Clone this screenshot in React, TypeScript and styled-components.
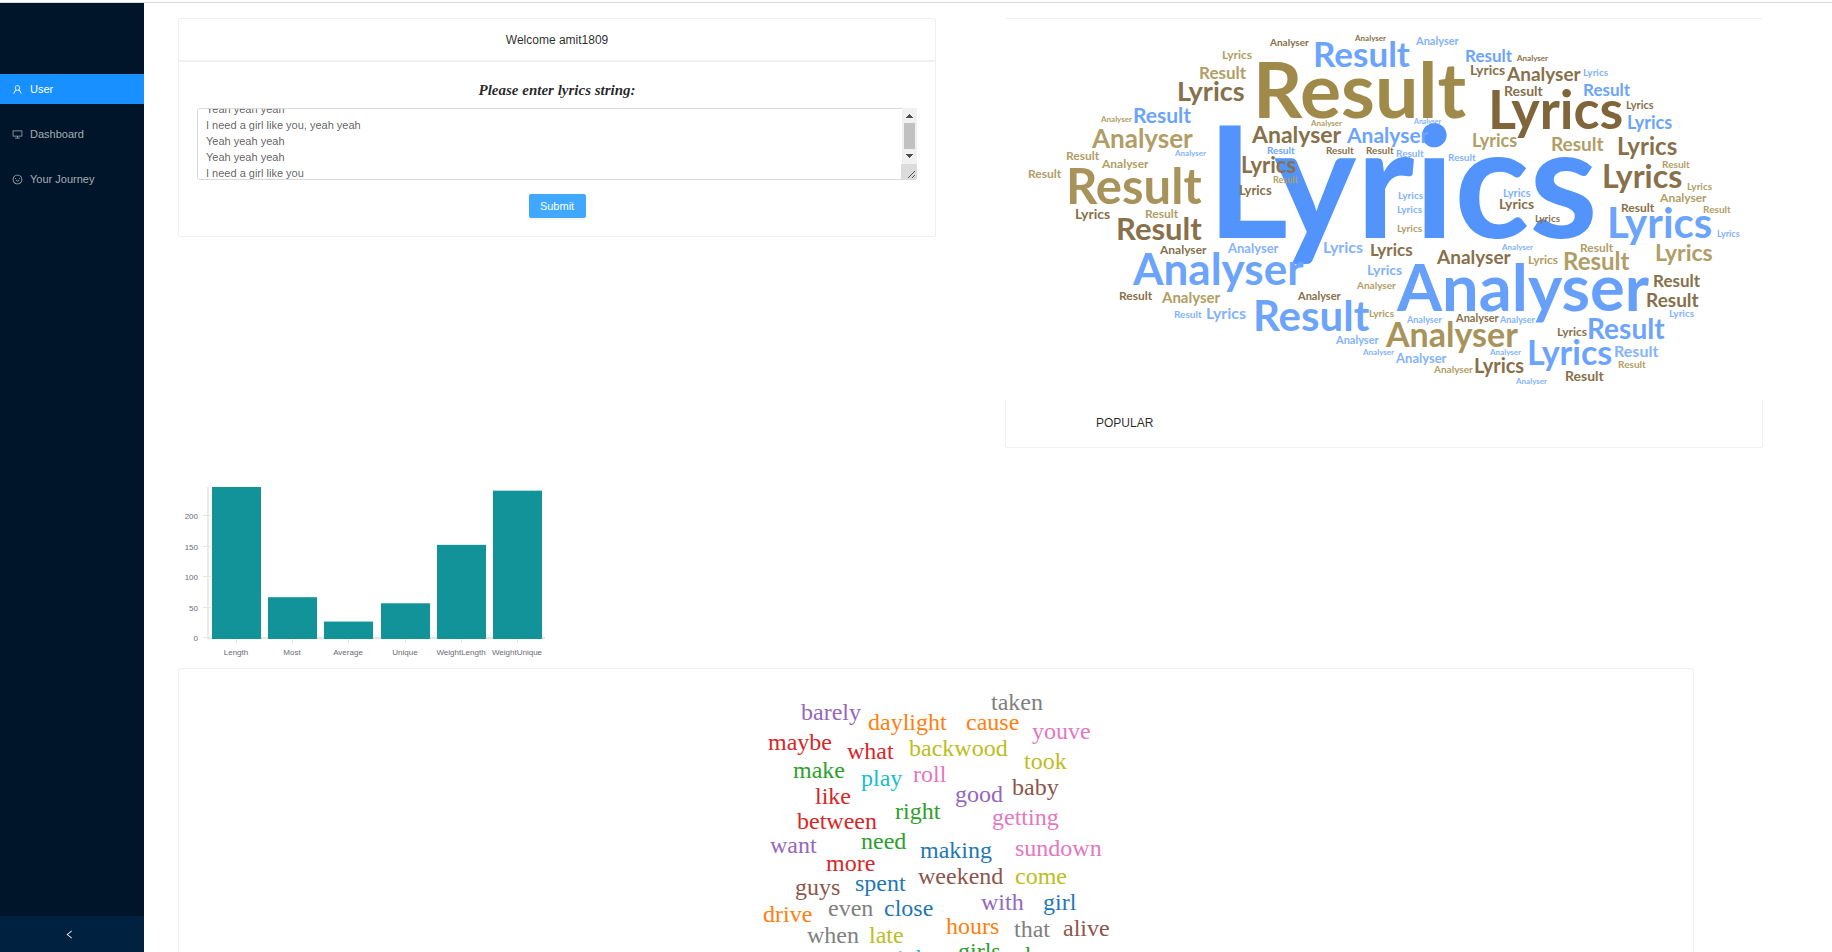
import React, { useEffect, useRef } from "react";
import styled, { createGlobalStyle } from "styled-components";
import { AiOutlineDesktop, AiOutlineLeft, AiOutlineSmile, AiOutlineUser } from "react-icons/ai";

const GlobalStyle = createGlobalStyle`
  *, *::before, *::after { box-sizing: border-box; }
  body {
    margin: 0;
    background: #fff;
    color: rgba(0, 0, 0, 0.85);
    font-family: "Liberation Sans", Arial, sans-serif;
    font-size: 12px;
    line-height: 18px;
  }
`;

const Page = styled.div`
  display: flex;
  flex-direction: column;
  height: 100vh;
  overflow: hidden;
`;

const TopRule = styled.div`
  flex: none;
  height: 3px;
  border-bottom: 1px solid #d9d9d9;
`;

const Layout = styled.div`
  display: flex;
  flex: 1;
  min-height: 0;
`;

const Sider = styled.aside`
  display: flex;
  flex: none;
  flex-direction: column;
  justify-content: space-between;
  width: 144px;
  background: #001529;
`;

const Menu = styled.nav`
  display: flex;
  flex-direction: column;
  gap: 15px;
  padding-top: 71px;
`;

const MenuItem = styled.a<{ $active?: boolean }>`
  display: flex;
  align-items: center;
  gap: 7px;
  height: 30px;
  padding-left: 12px;
  background: ${(p) => (p.$active ? "#1890ff" : "transparent")};
  color: ${(p) => (p.$active ? "#fff" : "rgba(255, 255, 255, 0.65)")};
  font-size: 11px;
  text-decoration: none;

  svg { width: 11px; height: 11px; }
`;

const Collapse = styled.button`
  display: flex;
  align-items: center;
  justify-content: center;
  height: 36px;
  border: 0;
  padding: 0 6px 0 0;
  background: #002140;
  color: #fff;

  svg { width: 11px; height: 11px; }
`;

const Content = styled.main`
  flex: 1;
  min-width: 0;
  overflow: hidden;
  padding: 15px 0 0 34px;
`;

const Row = styled.div`
  display: grid;
  grid-template-columns: 1fr 1fr;
  align-items: start;
`;

const Card = styled.section`
  width: 91.667%;
  border: 1px solid #f0f0f0;
  border-radius: 2px;
  background: #fff;
`;

const CardHead = styled.header`
  padding: 12px 18px 11px;
  border-bottom: 2px solid #f0f0f0;
  text-align: center;
`;

const LyricsForm = styled.form`
  display: flex;
  flex-direction: column;
  align-items: center;
  padding: 18px;
`;

const LyricsLabel = styled.label`
  margin-bottom: 8px;
  font-family: "Liberation Serif", "Times New Roman", serif;
  font-size: 15px;
  font-style: italic;
  font-weight: 700;
  line-height: 20px;
`;

const LyricsField = styled.div`
  position: relative;
  width: 100%;
  height: 72px;
  margin-bottom: 14px;
`;

const LyricsInput = styled.textarea`
  display: block;
  width: 100%;
  height: 100%;
  padding: 4px 24px 4px 8px;
  border: 1px solid #d9d9d9;
  border-radius: 3px;
  outline: 0;
  color: rgba(0, 0, 0, 0.65);
  font-family: inherit;
  font-size: 11px;
  line-height: 16px;
  resize: none;
  scrollbar-width: none;
`;

const ScrollTrack = styled.svg`
  position: absolute;
  top: 0;
  right: 0;
  pointer-events: none;
`;

const Submit = styled.button`
  width: 57px;
  height: 24px;
  border: 0;
  border-radius: 2px;
  background: #40a9ff;
  box-shadow: 0 2px 0 rgba(0, 0, 0, 0.04);
  color: #fff;
  font-family: inherit;
  font-size: 11px;
`;

const Cover = styled.div`
  margin: 0 -1px;
  background: #fff;

  svg { display: block; width: 100%; height: auto; }
`;

const CardCaption = styled.div`
  padding: 14px 90px 15px;
`;

const ChartBox = styled.figure`
  margin: 24px 0 0;

  svg { display: block; }
`;

const WordCard = styled(Card)`
  display: flex;
  justify-content: center;
  padding: 18px;

  svg { flex: none; overflow: visible; }
`;

const lyrics = [
  "I need a girl like you, yeah yeah",
  "Yeah yeah yeah",
  "Yeah yeah yeah",
  "I need a girl like you, yeah yeah",
  "Yeah yeah yeah",
  "Yeah yeah yeah",
  "I need a girl like you",
  "Maybe it's 6:45",
].join("\n");

const blue = "#6ca4fb";
const sky = "#84b3fc";
const brown = "#87704a";
const tan = "#b09e66";

type Placed = [word: string, x: number, y: number, width: number, color: string];

const coverWords: Placed[] = [
  ["Lyrics", 202, 219, 391, "#5294fb"],
  ["Analyser", 392, 292, 252, "#66a0fb"],
  ["Result", 248, 99, 213, "#a08a4a"],
  ["Analyser", 128, 266, 169, blue],
  ["Lyrics", 483, 110, 135, "#80643a"],
  ["Result", 61, 185, 135, "#a8935a"],
  ["Analyser", 381, 328, 131, "#a8935a"],
  ["Result", 248, 312, 115, blue],
  ["Lyrics", 602, 219, 106, blue],
  ["Analyser", 87, 129, 100, tan],
  ["Result", 308, 48, 97, blue],
  ["Analyser", 265, 27, 37, brown],
  ["Analyser", 350, 22, 31, brown],
  ["Lyrics", 217, 40, 29, tan],
  ["Result", 194, 60, 48, tan],
  ["Lyrics", 172, 82, 67, brown],
  ["Analyser", 96, 103, 31, tan],
  ["Result", 128, 104, 58, blue],
  ["Analyser", 306, 107, 32, tan],
  ["Analyser", 247, 124, 89, brown],
  ["Analyser", 342, 124, 80, blue],
  ["Result", 262, 135, 29, blue],
  ["Result", 321, 135, 28, brown],
  ["Result", 361, 135, 29, brown],
  ["Result", 61, 141, 34, tan],
  ["Analyser", 170, 137, 31, sky],
  ["Analyser", 97, 149, 48, tan],
  ["Result", 23, 159, 34, tan],
  ["Lyrics", 236, 154, 56, brown],
  ["Result", 268, 164, 24, tan],
  ["Lyrics", 234, 176, 32, brown],
  ["Analyser", 411, 26, 41, sky],
  ["Result", 460, 43, 48, blue],
  ["Analyser", 512, 42, 32, brown],
  ["Lyrics", 465, 56, 34, brown],
  ["Analyser", 502, 62, 74, brown],
  ["Lyrics", 578, 57, 25, sky],
  ["Result", 499, 77, 39, brown],
  ["Result", 578, 77, 48, blue],
  ["Lyrics", 621, 90, 28, brown],
  ["Lyrics", 622, 110, 44, blue],
  ["Analyser", 409, 105, 26, sky],
  ["Lyrics", 467, 128, 46, tan],
  ["Result", 546, 132, 53, tan],
  ["Lyrics", 612, 136, 60, brown],
  ["Result", 391, 138, 28, sky],
  ["Result", 443, 142, 29, sky],
  ["Result", 657, 149, 29, tan],
  ["Lyrics", 597, 169, 81, brown],
  ["Lyrics", 682, 171, 26, tan],
  ["Lyrics", 498, 178, 28, sky],
  ["Lyrics", 393, 180, 24, sky],
  ["Lyrics", 494, 190, 36, brown],
  ["Lyrics", 392, 194, 26, sky],
  ["Lyrics", 392, 213, 26, tan],
  ["Lyrics", 530, 203, 25, brown],
  ["Analyser", 655, 183, 48, tan],
  ["Result", 616, 193, 34, brown],
  ["Result", 698, 194, 29, tan],
  ["Lyrics", 712, 218, 23, sky],
  ["Analyser", 497, 231, 32, sky],
  ["Result", 575, 233, 34, tan],
  ["Lyrics", 523, 245, 31, tan],
  ["Result", 558, 251, 67, tan],
  ["Lyrics", 650, 242, 57, tan],
  ["Analyser", 432, 245, 74, brown],
  ["Lyrics", 365, 237, 43, brown],
  ["Lyrics", 362, 256, 35, sky],
  ["Analyser", 352, 270, 37, tan],
  ["Result", 648, 268, 48, brown],
  ["Result", 641, 288, 52, brown],
  ["Lyrics", 664, 298, 25, sky],
  ["Lyrics", 364, 298, 25, tan],
  ["Analyser", 402, 304, 36, sky],
  ["Analyser", 451, 303, 42, brown],
  ["Analyser", 495, 304, 36, sky],
  ["Result", 582, 320, 77, blue],
  ["Lyrics", 552, 317, 29, brown],
  ["Lyrics", 522, 346, 85, blue],
  ["Result", 609, 338, 43, sky],
  ["Result", 613, 349, 29, tan],
  ["Analyser", 485, 336, 31, sky],
  ["Analyser", 358, 336, 32, sky],
  ["Analyser", 391, 344, 52, sky],
  ["Analyser", 429, 354, 37, tan],
  ["Lyrics", 469, 354, 50, brown],
  ["Analyser", 511, 365, 31, sky],
  ["Result", 560, 362, 39, brown],
  ["Lyrics", 70, 200, 36, brown],
  ["Result", 140, 199, 34, tan],
  ["Result", 111, 221, 86, brown],
  ["Analyser", 155, 235, 47, brown],
  ["Analyser", 223, 234, 52, sky],
  ["Lyrics", 318, 234, 41, sky],
  ["Result", 114, 281, 34, brown],
  ["Analyser", 157, 284, 57, tan],
  ["Result", 169, 299, 29, sky],
  ["Lyrics", 201, 300, 39, sky],
  ["Analyser", 293, 281, 42, brown],
  ["Analyser", 331, 325, 42, sky],
];

const COVER_FONT = 'Lato, "Open Sans", sans-serif';
const ruler = document.createElement("canvas").getContext("2d")!;

function fontSizeFor(word: string, width: number) {
  ruler.font = `700 100px ${COVER_FONT}`;
  return Math.round((width * 100) / ruler.measureText(word).width);
}

function CoverCloud() {
  return (
    <svg viewBox="0 0 758 381" role="img" aria-label="Lyrics Analyser Result" fontFamily={COVER_FONT} fontWeight={700}>
      {coverWords.map(([word, x, y, width, color], i) => (
        <text key={i} x={x} y={y} fill={color} fontSize={fontSizeFor(word, width)}>
          {word}
        </text>
      ))}
    </svg>
  );
}

function LyricsScrollbar() {
  return (
    <ScrollTrack width="16" height="72" aria-hidden="true" shapeRendering="crispEdges">
      <rect x="1" width="15" height="56" fill="#f1f1f1" />
      <path d="M5 10h7l-3.5-4z" fill="#505050" />
      <rect x="3" y="15" width="11" height="26" fill="#c1c1c1" />
      <path d="M5 46h7l-3.5 4z" fill="#505050" />
      <path d="M0 56h16v14l-2 2H0z" fill="#dcdcdc" />
      <path d="M7 70l7-7M11 70l3-3" stroke="#555" fill="none" shapeRendering="auto" />
    </ScrollTrack>
  );
}

const bars = [
  { label: "Length", value: 248 },
  { label: "Most", value: 67 },
  { label: "Average", value: 27 },
  { label: "Unique", value: 57 },
  { label: "WeightLength", value: 153 },
  { label: "WeightUnique", value: 242 },
];
const ticks = [0, 50, 100, 150, 200];
const BASE = 166;
const yOf = (value: number) => BASE - (value * 151) / 248;

function BarChart() {
  return (
    <svg width="375" height="196" fontSize="8" fill="#6b6b76">
      <rect x="29" y="15" width="2" height="152" fill="#ebebed" />
      <rect x="29" y="165" width="338" height="2" fill="#e6e6e9" />
      {ticks.map((tick) => (
        <g key={tick}>
          <rect x="25" y={Math.round(yOf(tick)) - 1} width="8" height="1" fill="#e6e6e9" />
          <text x="20" y={Math.round(yOf(tick)) + 3} textAnchor="end">{tick}</text>
        </g>
      ))}
      {bars.map(({ label, value }, i) => {
        const x = 34 + Math.round(i * 56.2);
        return (
          <g key={label}>
            <rect x={x + 24} y={BASE} width="1" height="5" fill="#e6e6e9" />
            <rect x={x} y={yOf(value)} width="49" height={BASE + 1 - yOf(value)} fill="#12939a" />
            <text x={x + 24} y={BASE + 17} textAnchor="middle">{label}</text>
          </g>
        );
      })}
    </svg>
  );
}

const C = {
  blue: "#1f77b4",
  orange: "#ff7f0e",
  green: "#2ca02c",
  red: "#d62728",
  purple: "#9467bd",
  brown: "#8c564b",
  pink: "#e377c2",
  gray: "#7f7f7f",
  olive: "#bcbd22",
  cyan: "#17becf",
};

const lyricWords: [word: string, x: number, y: number, color: string][] = [
  ["barely", 65, 33, C.purple],
  ["taken", 255, 23, C.gray],
  ["daylight", 132, 43, C.orange],
  ["cause", 230, 43, C.orange],
  ["youve", 296, 52, C.pink],
  ["maybe", 32, 63, C.red],
  ["what", 111, 72, C.red],
  ["backwood", 173, 69, C.olive],
  ["took", 288, 82, C.olive],
  ["make", 57, 91, C.green],
  ["play", 125, 99, C.cyan],
  ["roll", 177, 95, C.pink],
  ["like", 79, 117, C.red],
  ["good", 219, 115, C.purple],
  ["baby", 276, 108, C.brown],
  ["right", 159, 132, C.green],
  ["between", 61, 142, C.red],
  ["getting", 256, 138, C.pink],
  ["want", 34, 166, C.purple],
  ["need", 125, 162, C.green],
  ["making", 184, 171, C.blue],
  ["sundown", 279, 169, C.pink],
  ["more", 90, 184, C.red],
  ["guys", 59, 208, C.brown],
  ["spent", 119, 204, C.blue],
  ["weekend", 182, 197, C.brown],
  ["come", 279, 197, C.olive],
  ["drive", 27, 235, C.orange],
  ["even", 92, 229, C.gray],
  ["close", 148, 229, C.blue],
  ["with", 245, 223, C.purple],
  ["girl", 307, 223, C.blue],
  ["when", 71, 256, C.gray],
  ["late", 133, 256, C.olive],
  ["hours", 210, 247, C.orange],
  ["that", 278, 250, C.gray],
  ["alive", 327, 249, C.brown],
  ["night", 149, 279, C.cyan],
  ["girls", 222, 272, C.green],
  ["else", 278, 276, C.green],
];

function LyricCloud() {
  return (
    <svg width="400" height="320" fontFamily='"Liberation Serif", "Times New Roman", serif' fontSize="24">
      {lyricWords.map(([word, x, y, color]) => (
        <text key={word} x={x} y={y} fill={color}>{word}</text>
      ))}
    </svg>
  );
}

export default function App() {
  const lyricsRef = useRef<HTMLTextAreaElement>(null);

  useEffect(() => {
    if (lyricsRef.current) lyricsRef.current.scrollTop = 44;
  }, []);

  return (
    <Page>
      <GlobalStyle />
      <TopRule />
      <Layout>
        <Sider>
          <Menu>
            <MenuItem href="#user" $active><AiOutlineUser />User</MenuItem>
            <MenuItem href="#dashboard"><AiOutlineDesktop />Dashboard</MenuItem>
            <MenuItem href="#journey"><AiOutlineSmile />Your Journey</MenuItem>
          </Menu>
          <Collapse type="button" aria-label="Collapse menu"><AiOutlineLeft /></Collapse>
        </Sider>
        <Content>
          <Row>
            <Card>
              <CardHead>Welcome amit1809</CardHead>
              <LyricsForm onSubmit={(e) => e.preventDefault()}>
                <LyricsLabel htmlFor="lyrics">Please enter lyrics string:</LyricsLabel>
                <LyricsField>
                  <LyricsInput id="lyrics" ref={lyricsRef} defaultValue={lyrics} />
                  <LyricsScrollbar />
                </LyricsField>
                <Submit type="submit">Submit</Submit>
              </LyricsForm>
            </Card>
            <Card>
              <Cover><CoverCloud /></Cover>
              <CardCaption>POPULAR</CardCaption>
            </Card>
          </Row>
          <ChartBox><BarChart /></ChartBox>
          <WordCard><LyricCloud /></WordCard>
        </Content>
      </Layout>
    </Page>
  );
}
